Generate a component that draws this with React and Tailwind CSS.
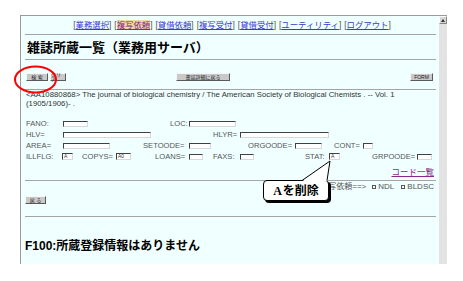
const navItems = ['業務選択', '複写依頼', '貸借依頼', '複写受付', '貸借受付', 'ユーティリティ', 'ログアウト']

function Btn({ className, children }) {
  return (
    <div className={`flex h-[8px] items-center justify-center border border-t-[#f6f6f6] border-l-[#f6f6f6] border-b-[#5a5a5a] border-r-[#5a5a5a] bg-[#c9c9c9] text-[5px] leading-none text-[#222] ${className}`}>
      {children}
    </div>
  )
}

function Input({ className, value }) {
  return (
    <div className={`flex h-[6px] items-center border border-t-[#404040] border-l-[#404040] border-b-[#d8d8d8] border-r-[#d8d8d8] bg-white pl-[1px] text-[5px] leading-none text-[#333] ${className}`}>
      {value}
    </div>
  )
}

function Rule() {
  return <div className="ml-[4px] mr-[3px] h-[1px] bg-[#a4a4a4]"></div>
}

function Check() {
  return <span className="mr-[2px] inline-block h-[4px] w-[4px] border border-[#555] bg-white"></span>
}

export default function App() {
  return (
    <div className="relative h-[281px] w-[463px] overflow-hidden bg-white font-['Liberation_Sans','Noto_Sans_CJK_JP',sans-serif] text-black">
      <div className="pl-[20px] pt-[15px]">
        <div className="flex h-[249px] w-[427px] border-l border-t border-[#9a9a9a]">
          <div className="flex-1 bg-[#f0ffff]">
            {/* nav links */}
            <div className="flex h-[18px] items-center justify-center gap-[3px] pl-[4px] pt-[1px] text-[8.4px] leading-none text-[#555]">
              {navItems.map((t, i) => (
                <span key={t}>
                  [
                  <span className={i === 1 ? 'bg-[#f2d7a2] text-[#7a2a8a] underline' : 'text-[#3a3acc] underline'}>{t}</span>
                  ]
                </span>
              ))}
            </div>
            <Rule />
            <div className="flex h-[24px] items-center pl-[6px] text-[13px] font-bold leading-none">雑誌所蔵一覧（業務用サーバ）</div>
            <Rule />

            {/* buttons */}
            <div className="flex h-[29px] items-start pl-[5px] pr-[6px] pt-[13px]">
              <Btn className="w-[22px]">検 索</Btn>
              <Btn className="ml-[2px] w-[16px]">クリア</Btn>
              <Btn className="ml-[110px] w-[54px]">書誌詳細に戻る</Btn>
              <div className="flex-1"></div>
              <Btn className="w-[23px]">FORM</Btn>
            </div>
            <Rule />

            {/* citation */}
            <div className="pl-[5px] text-[7.8px] leading-[9px] text-[#333]">
              <div>&lt;AA10880868&gt; The journal of biological chemistry / The American Society of Biological Chemists . -- Vol. 1</div>
              <div>(1905/1906)- .</div>
            </div>

            {/* fields */}
            <div className="mt-[10px] pl-[5px] text-[7.6px] leading-none text-[#555]">
              <div className="flex h-[11px] items-center">
                <span className="w-[37px]">FANO:</span>
                <Input className="w-[25px]" />
                <span className="ml-[82px] w-[19px]">LOC:</span>
                <Input className="w-[47px]" />
              </div>
              <div className="flex h-[11px] items-center">
                <span className="w-[37px]">HLV=</span>
                <Input className="w-[88px]" />
                <span className="ml-[62px] w-[27px]">HLYR=</span>
                <Input className="w-[89px]" />
              </div>
              <div className="flex h-[11px] items-center">
                <span className="w-[37px]">AREA=</span>
                <Input className="w-[47px]" />
                <span className="ml-[33px] w-[46px]">SETOODE=</span>
                <Input className="w-[22px]" />
                <span className="ml-[37px] w-[47px]">ORGOODE=</span>
                <Input className="w-[27px]" />
                <span className="ml-[12px] w-[29px]">CONT=</span>
                <Input className="w-[10px]" />
              </div>
              <div className="flex h-[11px] items-center">
                <span className="w-[36px]">ILLFLG:</span>
                <Input className="h-[7px] w-[11px]" value="A" />
                <span className="ml-[9px] w-[34px]">COPYS=</span>
                <Input className="h-[7px] w-[15px]" value="A0" />
                <span className="ml-[24px] w-[34px]">LOANS=</span>
                <Input className="w-[14px]" />
                <span className="ml-[10px] w-[27px]">FAXS:</span>
                <Input className="w-[14px]" />
                <span className="ml-[51px] w-[24px]">STAT:</span>
                <Input className="h-[7px] w-[11px]" value="A" />
                <span className="ml-[32px] w-[45px]">GRPOODE=</span>
                <Input className="w-[15px]" />
              </div>
            </div>

            <div className="mt-[5px] flex h-[10px] items-center justify-end pr-[5px] text-[8.5px] leading-none text-[#8a2a8a] underline">コード一覧</div>
            <div className="mt-[3px]">
              <Rule />
            </div>

            <div className="mt-[2px] flex h-[8px] items-center justify-end pr-[5px] text-[8px] leading-none text-[#555]">
              <span className="mr-[6px]">複写依頼==&gt;</span>
              <Check />
              <span className="mr-[7px]">NDL</span>
              <Check />
              <span>BLDSC</span>
            </div>

            <div className="mt-[5px] pl-[4px]">
              <Btn className="w-[21px]">戻 る</Btn>
            </div>

            <div className="mt-[12px]">
              <Rule />
            </div>

            <div className="mt-[22px] flex h-[14px] items-center pl-[4px] text-[12px] font-bold leading-none">F100:所蔵登録情報はありません</div>
          </div>

          {/* scrollbar */}
          <div className="flex w-[8px] flex-col bg-[#e3e3e3]">
            <div className="flex h-[8px] items-center justify-center border border-t-[#fafafa] border-l-[#fafafa] border-b-[#888] border-r-[#888] bg-[#d6d6d6]">
              <svg width="4" height="3" viewBox="0 0 4 3">
                <polygon points="2,0 4,3 0,3" fill="#333" />
              </svg>
            </div>
          </div>
        </div>
      </div>

      {/* red circle annotation */}
      <svg className="absolute left-[13px] top-[65px]" width="46" height="30" viewBox="0 0 46 30">
        <ellipse cx="22.5" cy="14.5" rx="20.5" ry="13" fill="none" stroke="#ff0000" strokeWidth="2" />
      </svg>

      {/* callout */}
      <div className="absolute left-[263px] top-[180px] flex h-[21px] w-[66px] items-center justify-center rounded-[4px] border border-black bg-white text-[12px] font-bold leading-none shadow-[2px_2px_0_#000]">
        <span className="font-['Liberation_Serif','Noto_Sans_CJK_JP',serif]">A</span>
        <span className="ml-[1px]">を削除</span>
      </div>
      <svg className="absolute left-[298px] top-[158px]" width="34" height="25" viewBox="0 0 34 25">
        <polygon points="4,23.5 32,3 29,23.5" fill="#fff" />
        <polyline points="4,22.5 32,3 29,22.5" fill="none" stroke="#000" strokeWidth="1" />
      </svg>
    </div>
  )
}
